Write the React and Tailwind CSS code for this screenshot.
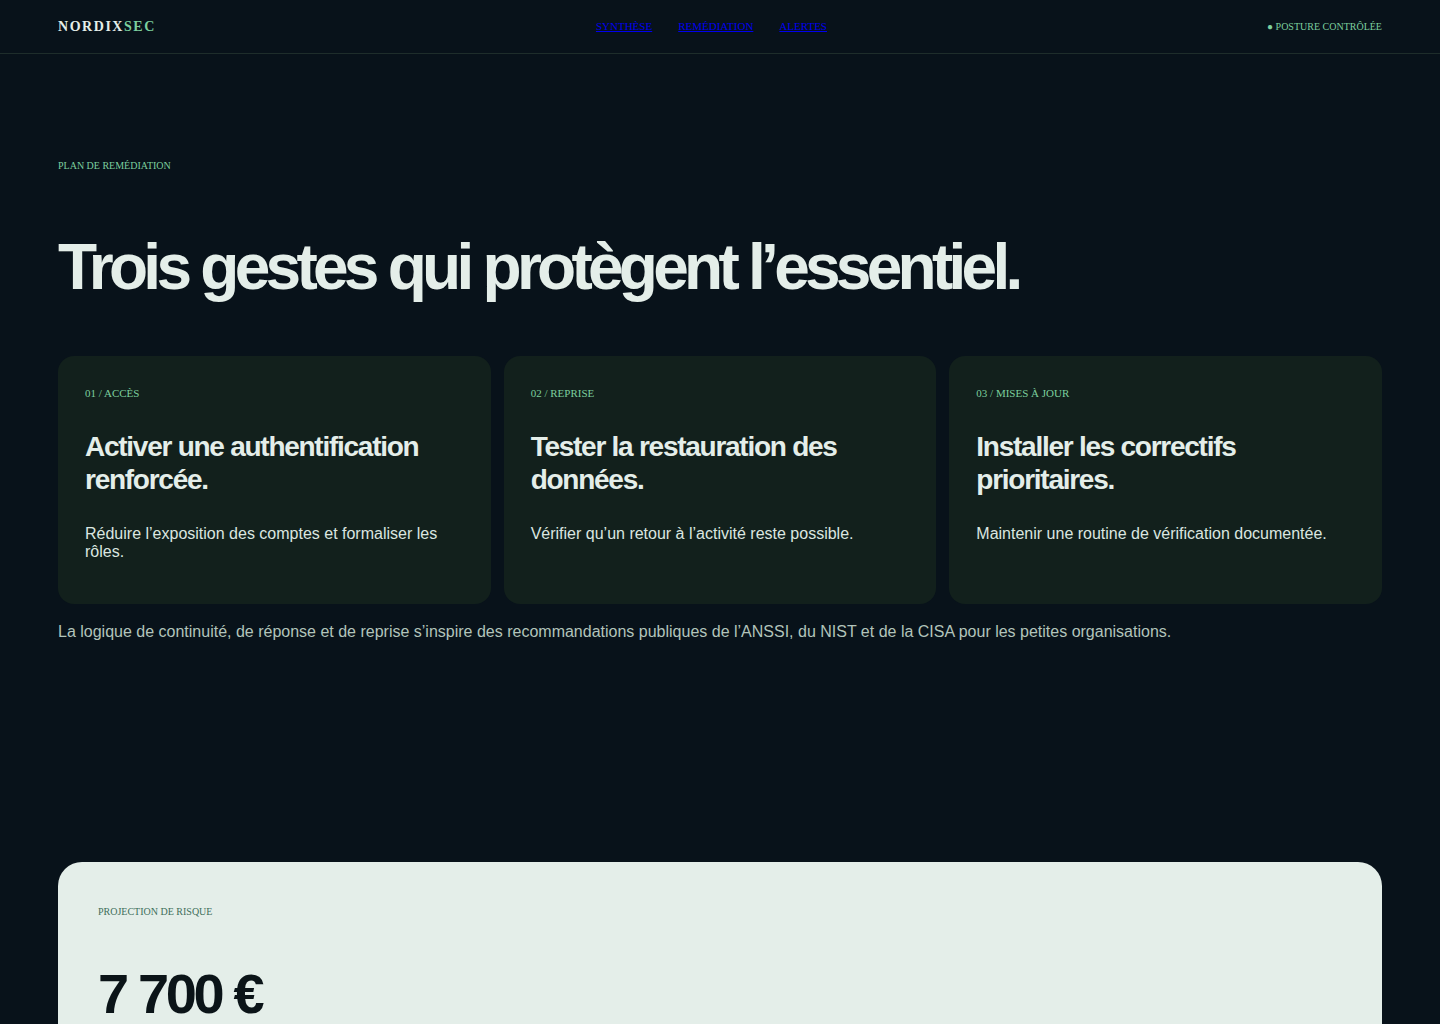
import React from 'react';

const serif = "font-['Liberation_Serif',serif]";
const sans = "font-['Liberation_Sans',Arial,sans-serif]";

const steps = [
    {
        label: '01 / ACCÈS',
        title: 'Activer une authentification renforcée.',
        text: 'Réduire l’exposition des comptes et formaliser les rôles.',
    },
    {
        label: '02 / REPRISE',
        title: 'Tester la restauration des données.',
        text: 'Vérifier qu’un retour à l’activité reste possible.',
    },
    {
        label: '03 / MISES À JOUR',
        title: 'Installer les correctifs prioritaires.',
        text: 'Maintenir une routine de vérification documentée.',
    },
];

export default function App() {
    return (
        <div className={`min-h-screen bg-[#08121a] ${sans}`}>
            <header className="h-[54px] border-b border-[#1e2d2b] px-[58px] flex items-center justify-between">
                <div className={`${serif} text-[14px] font-bold tracking-[0.11em] text-[#e4eee9]`}>
                    NORDIX<span className="text-[#7ccf9e]">SEC</span>
                </div>
                <nav className={`${serif} flex gap-[26px] text-[11px]`}>
                    <a href="#synthese" className="text-[#0000ee] underline">SYNTHÈSE</a>
                    <a href="#remediation" className="text-[#0000ee] underline">REMÉDIATION</a>
                    <a href="#alertes" className="text-[#0000ee] underline">ALERTES</a>
                </nav>
                <div className={`${serif} text-[10px] text-[#7ccf9e]`}>● POSTURE CONTRÔLÉE</div>
            </header>

            <main className="px-[58px]">
                <section id="remediation" className="pt-[104px] pb-[111px]">
                    <p className={`${serif} text-[10px] leading-4 text-[#7ccf9e]`}>PLAN DE REMÉDIATION</p>
                    <h1 className="mt-[61px] text-[64px] leading-none font-bold tracking-[-0.074em] text-[#e4eee9]">
                        Trois gestes qui protègent l’essentiel.
                    </h1>

                    <div className="mt-[57px] grid grid-cols-3 gap-[13px]">
                        {steps.map((step) => (
                            <div key={step.label} className="bg-[#12201c] rounded-2xl pt-[29px] px-[27px] pb-[43px]">
                                <p className={`${serif} text-[11px] leading-4 text-[#7ccf9e]`}>{step.label}</p>
                                <h3 className="mt-[29px] text-[28px] leading-[33px] font-bold tracking-[-0.045em] text-[#e4eee9] pr-10">
                                    {step.title}
                                </h3>
                                <p className="mt-[29px] text-[16px] leading-[18px] text-[#dbe6e0] pr-6">{step.text}</p>
                            </div>
                        ))}
                    </div>

                    <p className="mt-[19px] text-[16px] leading-[18px] text-[#b2c4bb]">
                        La logique de continuité, de réponse et de reprise s’inspire des recommandations publiques de l’ANSSI, du NIST et de la CISA pour les petites organisations.
                    </p>
                </section>

                <section className="pt-[110px]">
                    <div className="bg-[#e4eee9] rounded-3xl px-10 pt-[42px] pb-16">
                        <p className={`${serif} text-[10px] leading-4 text-[#3e6e5b]`}>PROJECTION DE RISQUE</p>
                        <p className="mt-[46px] text-[56px] leading-none font-bold tracking-[-0.06em] text-[#0b1418]">7 700 €</p>
                    </div>
                </section>
            </main>
        </div>
    );
}
